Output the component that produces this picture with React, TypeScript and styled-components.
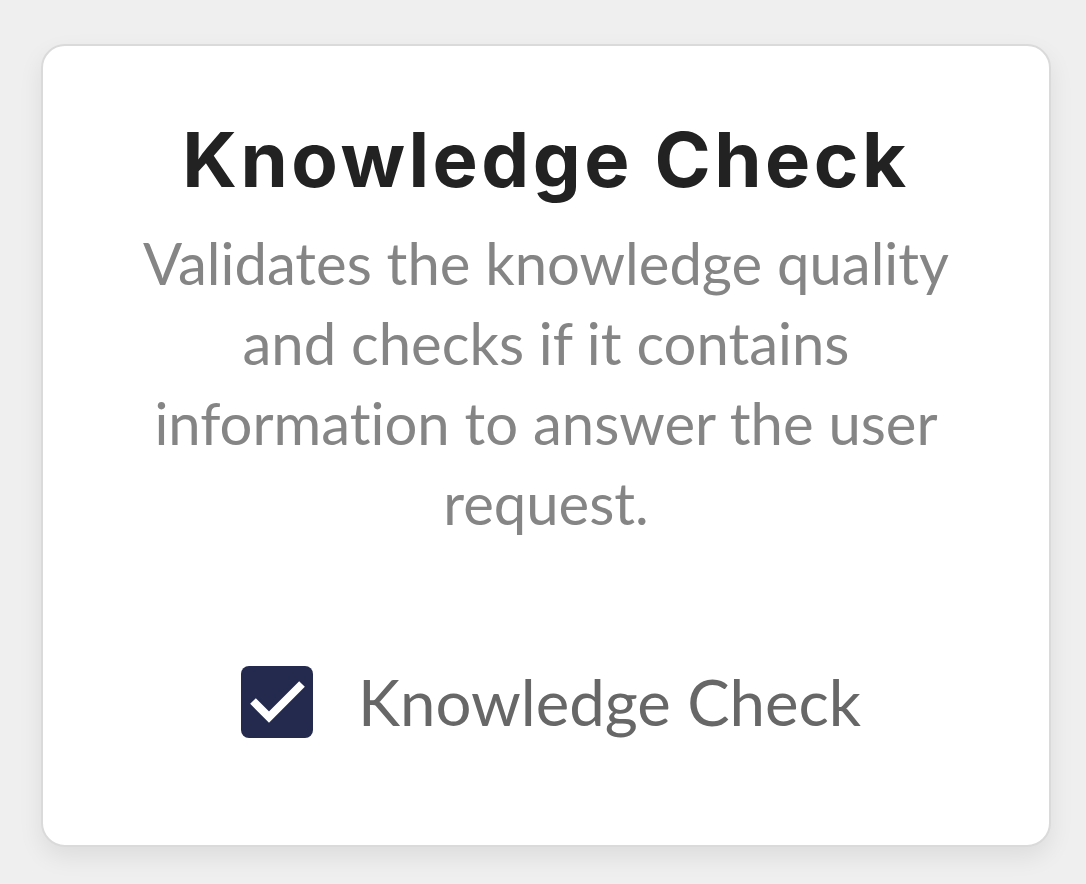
import styled, { createGlobalStyle } from "styled-components";

const GlobalStyle = createGlobalStyle`
  html, body {
    margin: 0;
    padding: 0;
    background: #efefef;
  }
  * {
    box-sizing: border-box;
  }
`;

const Page = styled.main`
  width: 1086px;
  height: 884px;
  padding: 44px 35px 37px 41px;
  background: #efefef;
`;

const Card = styled.section`
  width: 1010px;
  height: 803px;
  background: #ffffff;
  border: 2px solid #dadada;
  border-radius: 24px;
  box-shadow: 0 10px 24px rgba(0, 0, 0, 0.08);
  display: flex;
  flex-direction: column;
  align-items: center;
  padding: 68px 80px 0;
`;

const Title = styled.h1`
  margin: 0;
  font-family: Inter, "Liberation Sans", sans-serif;
  font-weight: 700;
  font-size: 76px;
  line-height: 90px;
  letter-spacing: 3.5px;
  color: #222222;
  text-align: center;
`;

const Description = styled.p`
  margin: 19px 0 0;
  font-family: Lato, "Liberation Sans", sans-serif;
  font-size: 58px;
  line-height: 80px;
  font-variant-ligatures: none;
  color: #858585;
  text-align: center;
`;

const CheckRow = styled.label`
  margin: 119px 0 0 10px;
  display: flex;
  align-items: center;
  gap: 45px;
  cursor: pointer;
`;

const CheckBox = styled.span`
  width: 72px;
  height: 72px;
  border-radius: 8px;
  background: #232a4e;
  display: flex;
  align-items: center;
  justify-content: center;
`;

const CheckLabel = styled.span`
  font-family: Lato, "Liberation Sans", sans-serif;
  font-size: 63.5px;
  line-height: 80px;
  color: #676767;
`;

export default function App() {
  return (
    <>
      <GlobalStyle />
      <Page>
        <Card>
          <Title>Knowledge Check</Title>
          <Description>
            Validates the knowledge quality and checks if it contains information to answer the user request.
          </Description>
          <CheckRow>
            <CheckBox>
              <svg width="72" height="72" viewBox="0 0 72 72" fill="none">
                <path d="M12 35 L28 51 L61 18" stroke="#ffffff" strokeWidth="8" />
              </svg>
            </CheckBox>
            <CheckLabel>Knowledge Check</CheckLabel>
          </CheckRow>
        </Card>
      </Page>
    </>
  );
}
